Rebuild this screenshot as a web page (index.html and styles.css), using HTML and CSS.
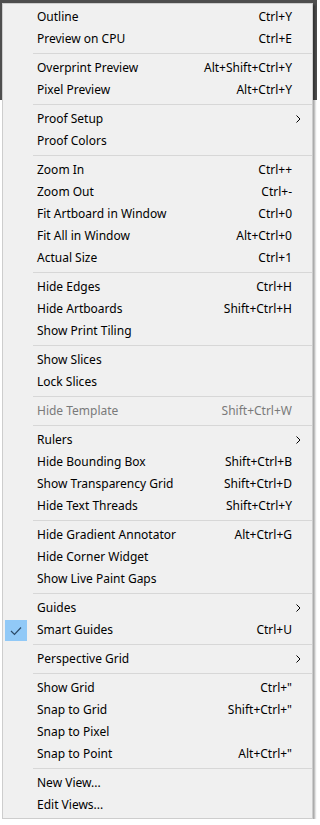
FILE: index.html
```html
<!DOCTYPE html>
<html lang="en">
<head>
    <meta charset="UTF-8">
    <meta name="viewport" content="width=device-width, initial-scale=1.0">
    <title>View Menu</title>
    <link rel="stylesheet" href="styles.css">
</head>
<body>
    <div class="backdrop"></div>
    <div class="menu">
        <div class="item"><span class="label">Outline</span><span class="key">Ctrl+Y</span></div>
        <div class="item"><span class="label">Preview on CPU</span><span class="key">Ctrl+E</span></div>
        <div class="sep"></div>
        <div class="item"><span class="label">Overprint Preview</span><span class="key">Alt+Shift+Ctrl+Y</span></div>
        <div class="item"><span class="label">Pixel Preview</span><span class="key">Alt+Ctrl+Y</span></div>
        <div class="sep"></div>
        <div class="item sub"><span class="label">Proof Setup</span><svg class="arrow" width="5" height="8" viewBox="0 0 5 8"><path d="M0.5 0.5 L4 4 L0.5 7.5" fill="none" stroke="#000" stroke-width="1"/></svg></div>
        <div class="item"><span class="label">Proof Colors</span></div>
        <div class="sep"></div>
        <div class="item"><span class="label">Zoom In</span><span class="key">Ctrl++</span></div>
        <div class="item"><span class="label">Zoom Out</span><span class="key">Ctrl+-</span></div>
        <div class="item"><span class="label">Fit Artboard in Window</span><span class="key">Ctrl+0</span></div>
        <div class="item"><span class="label">Fit All in Window</span><span class="key">Alt+Ctrl+0</span></div>
        <div class="item"><span class="label">Actual Size</span><span class="key">Ctrl+1</span></div>
        <div class="sep"></div>
        <div class="item"><span class="label">Hide Edges</span><span class="key">Ctrl+H</span></div>
        <div class="item"><span class="label">Hide Artboards</span><span class="key">Shift+Ctrl+H</span></div>
        <div class="item"><span class="label">Show Print Tiling</span></div>
        <div class="sep"></div>
        <div class="item"><span class="label">Show Slices</span></div>
        <div class="item"><span class="label">Lock Slices</span></div>
        <div class="sep"></div>
        <div class="item disabled"><span class="label">Hide Template</span><span class="key">Shift+Ctrl+W</span></div>
        <div class="sep"></div>
        <div class="item sub"><span class="label">Rulers</span><svg class="arrow" width="5" height="8" viewBox="0 0 5 8"><path d="M0.5 0.5 L4 4 L0.5 7.5" fill="none" stroke="#000" stroke-width="1"/></svg></div>
        <div class="item"><span class="label">Hide Bounding Box</span><span class="key">Shift+Ctrl+B</span></div>
        <div class="item"><span class="label">Show Transparency Grid</span><span class="key">Shift+Ctrl+D</span></div>
        <div class="item"><span class="label">Hide Text Threads</span><span class="key">Shift+Ctrl+Y</span></div>
        <div class="sep"></div>
        <div class="item"><span class="label">Hide Gradient Annotator</span><span class="key">Alt+Ctrl+G</span></div>
        <div class="item"><span class="label">Hide Corner Widget</span></div>
        <div class="item"><span class="label">Show Live Paint Gaps</span></div>
        <div class="sep"></div>
        <div class="item sub"><span class="label">Guides</span><svg class="arrow" width="5" height="8" viewBox="0 0 5 8"><path d="M0.5 0.5 L4 4 L0.5 7.5" fill="none" stroke="#000" stroke-width="1"/></svg></div>
        <div class="item checked">
            <span class="check"><svg width="12" height="10" viewBox="0 0 12 10"><path d="M1 5 L4.5 8.5 L11 1.5" fill="none" stroke="#2b4a68" stroke-width="1.2"/></svg></span>
            <span class="label">Smart Guides</span><span class="key">Ctrl+U</span>
        </div>
        <div class="sep"></div>
        <div class="item sub"><span class="label">Perspective Grid</span><svg class="arrow" width="5" height="8" viewBox="0 0 5 8"><path d="M0.5 0.5 L4 4 L0.5 7.5" fill="none" stroke="#000" stroke-width="1"/></svg></div>
        <div class="sep"></div>
        <div class="item"><span class="label">Show Grid</span><span class="key">Ctrl+"</span></div>
        <div class="item"><span class="label">Snap to Grid</span><span class="key">Shift+Ctrl+"</span></div>
        <div class="item"><span class="label">Snap to Pixel</span></div>
        <div class="item"><span class="label">Snap to Point</span><span class="key">Alt+Ctrl+"</span></div>
        <div class="sep"></div>
        <div class="item"><span class="label">New View...</span></div>
        <div class="item"><span class="label">Edit Views...</span></div>
    </div>
</body>
</html>
```

FILE: styles.css
```css
body {
    margin: 0;
    background: #ffffff;
    font-family: "Noto Sans", "Open Sans", sans-serif;
    font-size: 12px;
    color: #000;
}
/* dark app window showing behind the menu */
.backdrop {
    position: absolute;
    left: 0;
    top: 0;
    width: 317px;
    height: 100px;
    background: #4e4e4e;
}
.menu {
    position: relative;
    margin: 3px 0 0 2px;
    width: 309px;
    padding: 2px 0 2px 0;
    background: #f0f0f0;
    border: 1px solid #cdcdcd;
    box-shadow: 2px 2px 2px rgba(0, 0, 0, 0.35);
}
.item {
    position: relative;
    display: flex;
    align-items: center;
    height: 21px;
    padding: 0 20px 1px 34px;
}
.label {
    flex: 1;
    white-space: nowrap;
}
.key {
    white-space: nowrap;
}
.sub {
    padding-right: 11px;
}
.arrow {
    display: block;
}
.disabled {
    color: #7a7a7a;
}
.check {
    position: absolute;
    left: 2px;
    top: 1px;
    width: 22px;
    height: 21px;
    background: #91c9f7;
    display: flex;
    justify-content: center;
    align-items: center;
}
.sep {
    height: 7px;
    display: flex;
    align-items: center;
    padding-left: 30px;
}
.sep::after {
    content: "";
    flex: 1;
    height: 1px;
    background: #d7d7d7;
}
```
